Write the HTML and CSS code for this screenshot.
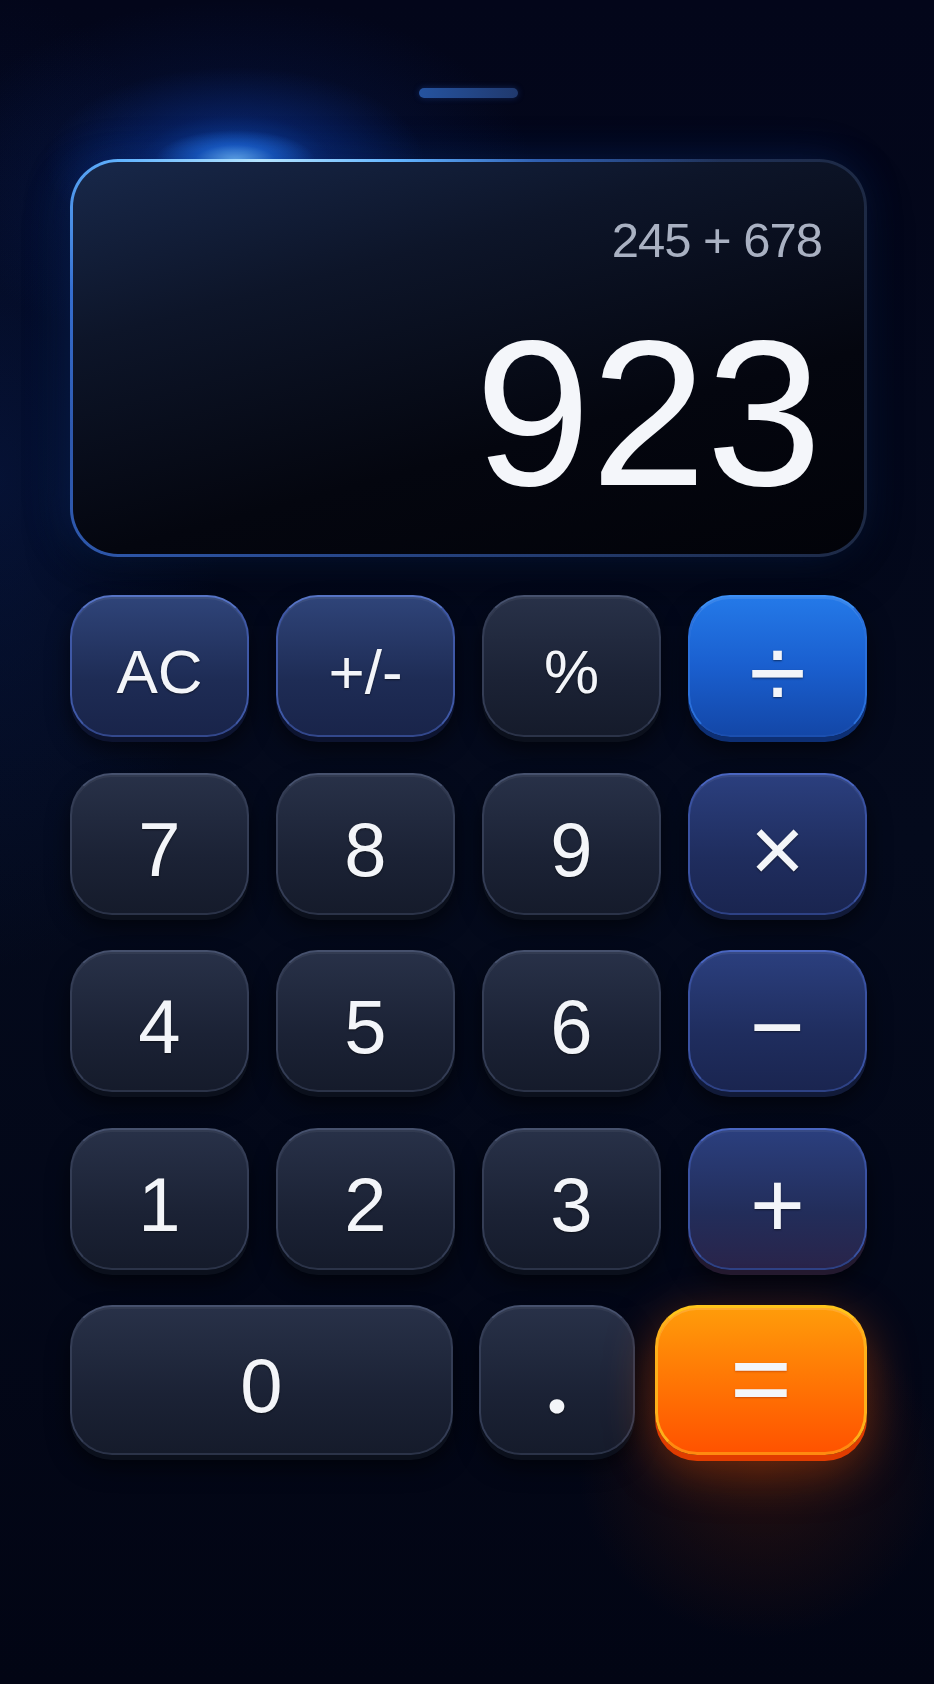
FILE: index.html
```html
<!DOCTYPE html>
<html lang="en">

<head>
    <meta charset="UTF-8">
    <meta name="viewport" content="width=device-width, initial-scale=1.0">
    <title>Calculator</title>
    <link rel="stylesheet" href="styles.css">
</head>

<body>
    <div class="calculator">
        <div class="handle"></div>

        <div class="display">
            <div class="expression">245 + 678</div>
            <div class="result">923</div>
        </div>

        <div class="keys">
            <button class="key fn">AC</button>
            <button class="key fn small">+/-</button>
            <button class="key small">%</button>
            <button class="key divide">÷</button>

            <button class="key">7</button>
            <button class="key">8</button>
            <button class="key">9</button>
            <button class="key op">×</button>

            <button class="key">4</button>
            <button class="key">5</button>
            <button class="key">6</button>
            <button class="key op">−</button>

            <button class="key">1</button>
            <button class="key">2</button>
            <button class="key">3</button>
            <button class="key op plus">+</button>
        </div>

        <div class="keys-last">
            <button class="key zero">0</button>
            <button class="key point">.</button>
            <button class="key equals">=</button>
        </div>
    </div>
</body>

</html>
```

FILE: styles.css
```css
body {
    margin: 0;
    min-height: 1684px;
    font-family: "Liberation Sans", Arial, sans-serif;
    color: #f3f5f9;
    background-color: #030717;
    background-image:
        radial-gradient(ellipse 80px 30px at 235px 160px, rgba(120, 195, 255, 0.9), rgba(40, 130, 255, 0.45) 50%, transparent 100%),
        radial-gradient(ellipse 190px 95px at 235px 162px, rgba(20, 100, 240, 0.6), rgba(15, 70, 200, 0.25) 50%, transparent 100%),
        radial-gradient(ellipse 400px 240px at 235px 180px, rgba(10, 50, 150, 0.3), transparent 75%),
        radial-gradient(ellipse 320px 700px at 0 480px, rgba(10, 40, 110, 0.3), transparent 70%),
        radial-gradient(ellipse 260px 240px at 760px 1470px, rgba(120, 40, 0, 0.28), transparent 70%),
        linear-gradient(180deg, #03061a 0%, #040a1c 50%, #020514 100%);
}

.calculator {
    width: 797px;
    padding: 88px 0 0 70px;
}

/* little grab bar on top */
.handle {
    width: 99px;
    height: 10px;
    margin: 0 auto 61px;
    border-radius: 5px;
    background: linear-gradient(90deg, #2553a0, #20396e);
    box-shadow: 0 0 6px rgba(40, 90, 200, 0.35);
}

.display {
    box-sizing: border-box;
    height: 398px;
    padding: 54px 42px 0 0;
    border: 3px solid transparent;
    border-radius: 48px;
    text-align: right;
    background:
        linear-gradient(165deg, #18284a 0%, #0d1529 30%, #04060f 66%, #020309 100%) padding-box,
        radial-gradient(ellipse 460px 300px at 190px 0, #b4e4ff, #62b4ff 30%, rgba(60, 130, 240, 0.5) 60%, transparent 100%) border-box,
        linear-gradient(90deg, #2e58ad 0%, #25427f 45%, #1d2944 100%) border-box;
    box-shadow: -6px 0 40px rgba(20, 80, 200, 0.25), 0 20px 40px rgba(0, 0, 0, 0.5);
}

.expression {
    font-size: 49px;
    line-height: 1;
    letter-spacing: -1px;
    color: #a9b1c2;
}

.result {
    margin-top: 44px;
    font-size: 208px;
    line-height: 1;
    color: #f4f6fa;
}

.keys {
    display: grid;
    grid-template-columns: repeat(4, 1fr);
    grid-auto-rows: 142px;
    column-gap: 27px;
    row-gap: 35.5px;
    margin-top: 38px;
}

.keys-last {
    display: flex;
    gap: 20px;
    height: 150px;
    margin-top: 35px;
}

.key {
    display: flex;
    align-items: center;
    justify-content: center;
    padding: 12px 0 0;
    border: 2px solid;
    border-color: #46516d #343d55 #2b3348;
    border-radius: 42px;
    background: linear-gradient(180deg, #283148 0%, #1b2235 60%, #151b2b 100%);
    box-shadow: inset 0 2px 0 rgba(255, 255, 255, 0.05), 0 5px 0 #0b101c, 0 12px 22px rgba(0, 0, 0, 0.55);
    color: #f3f5f9;
    font-family: inherit;
    font-size: 76px;
    line-height: 1;
    text-shadow: 0 1px 2px rgba(0, 0, 0, 0.5);
    cursor: pointer;
}

.small {
    font-size: 62px;
}

.fn {
    font-size: 62px;
    border-color: #5673c4 #3f58a6 #33488c;
    background: linear-gradient(180deg, #2f4479 0%, #1e2c55 60%, #19244a 100%);
    box-shadow: inset 0 2px 0 rgba(255, 255, 255, 0.06), 0 5px 0 #0d1430, 0 12px 22px rgba(0, 0, 0, 0.55);
}

.divide {
    font-size: 104px;
    border-color: #3d8ff5 #2a70dc #1b4fb0;
    background: linear-gradient(180deg, #2479e8 0%, #1a5fcf 50%, #1347a8 100%);
    box-shadow: inset 0 2px 0 rgba(255, 255, 255, 0.1), 0 5px 0 #0d2f74, 0 12px 24px rgba(0, 0, 0, 0.55);
}

.op {
    font-size: 94px;
    border-color: #4a66c0 #3a52a2 #2e4285;
    background: linear-gradient(180deg, #2b3f7e 0%, #1f2d5e 60%, #1a2550 100%);
    box-shadow: inset 0 2px 0 rgba(255, 255, 255, 0.06), 0 5px 0 #111a38, 0 12px 22px rgba(0, 0, 0, 0.55);
}

.plus {
    background: linear-gradient(180deg, #2b3f7e 0%, #222d5a 60%, #29244a 100%);
    box-shadow: inset 0 2px 0 rgba(255, 255, 255, 0.06), 0 5px 0 #231a30, 0 12px 22px rgba(0, 0, 0, 0.55);
}

.zero {
    width: 383px;
    margin-right: 6px;
}

.point {
    width: 156px;
    padding: 0 0 4px;
    font-family: Lato, sans-serif;
    font-size: 90px;
    font-weight: 900;
}

.equals {
    flex: 1;
    padding: 0 0 4px;
    font-size: 106px;
    border: 3px solid;
    border-color: #ffc41c #ffb01a #ff8a10;
    background: linear-gradient(180deg, #ff9c0a 0%, #ff7a05 45%, #ff5300 100%);
    box-shadow: inset 0 2px 0 rgba(255, 255, 255, 0.15), 0 6px 0 #e03c00, 0 14px 50px rgba(255, 90, 0, 0.4);
    text-shadow: 0 1px 2px rgba(160, 40, 0, 0.5);
}
```
